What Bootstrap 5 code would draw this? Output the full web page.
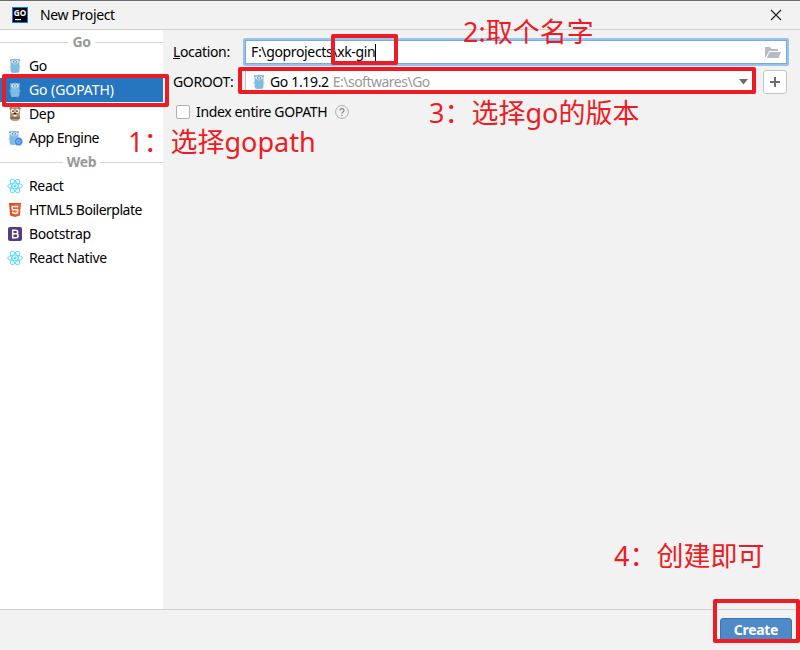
<!DOCTYPE html>
<html lang="zh">
<head>
<meta charset="utf-8">
<title>New Project</title>
<link href="https://cdn.jsdelivr.net/npm/bootstrap@5.3.0/dist/css/bootstrap.min.css" rel="stylesheet">
<style>
body{width:800px;height:650px;overflow:hidden;background:#f2f2f2;color:#000;font:14px/24px "Noto Sans","Noto Sans CJK SC",sans-serif;letter-spacing:-.35px}
.window{height:650px;border-top:1px solid #6b6a6d}
.titlebar{height:29px;border-bottom:1px solid #d1d1d1;padding:0 18px 0 12px}
.sidebar{width:163px;background:#fff}
.group{height:24px;color:#999;font-weight:700;gap:4px}
.group::before,.group::after{content:"";flex:1;height:1px;background:#d5d5d5}
.item{height:24px;padding-left:7px;gap:6px;white-space:nowrap}
.item.chosen{background:#2675bf;color:#fff;letter-spacing:-.08px}
.tight{letter-spacing:-.5px}
svg{display:block;flex:none}
.form-area{padding:8px 11px 0 10px}
.label-col{width:70px}
.location{height:28px;border:2px solid #97c3f3;box-shadow:inset 0 0 0 1px #7ea8d6;background:#fff;padding:0 6px;border-radius:2px}
.caret{width:1px;height:17px;background:#000}
.goroot-row{padding-top:3px}
.goroot{height:25px;width:510px;border:1px solid #c4c4c4;background:#fff;margin-left:2px;padding:0 6px 0 5px}
.ver{margin-left:3px}
.add{width:24px;height:24px;border:1px solid #c4c4c4;border-radius:3px;background:#fff;margin-right:2px}
.index-row{padding:6px 0 0 3px}
.check{width:14px;height:14px;border:1px solid #b0b0b0;border-radius:2px;background:#fff}
.index-text{margin-left:6px}
.muted{color:#999;letter-spacing:-.5px}
.bottom{height:41px;border-top:1px solid #d1d1d1;padding:8px 8px 0 0}
.create{width:72px;height:23px;background:#4e8ac8;border:1px solid #3d75b2;border-radius:3px 3px 0 0;color:#fff;font-weight:700;line-height:22px;letter-spacing:-.3px}
.frame{position:absolute;border:4px solid #ed1c24;border-radius:2px}
.note{position:absolute;color:#ed1c24;font-size:27px;line-height:36px;white-space:nowrap;letter-spacing:0}
.f1{left:2px;top:74px;width:167px;height:33px}
.f2{left:331px;top:34px;width:67px;height:31px}
.f3{left:238px;top:67px;width:518px;height:27px}
.f4{left:713px;top:599px;width:87px;height:44px}
.n1{left:128px;top:124px}.n2{left:463px;top:14px}.n3{left:429px;top:95px}.n4{left:614px;top:538px}
</style>
<script src="https://cdn.jsdelivr.net/npm/bootstrap@5.3.0/dist/js/bootstrap.bundle.min.js"></script>
</head>
<body>
<svg width="0" height="0" class="position-absolute">
<symbol id="gopher" viewBox="0 0 16 16"><circle cx="4" cy="2.200" r="1.100" fill="#7bb5d8"/><circle cx="12" cy="2.200" r="1.100" fill="#7bb5d8"/><path d="M3.500 4C3.500 1.700 5 .8 8 .8s4.500.9 4.500 3.200V12c0 2.200-1.500 3-4.500 3s-4.500-.8-4.500-3z" fill="#7bbde3"/><path d="M2.600 8h1v1.500h-1zM12.400 8h1v1.500h-1zM4.500 14.300h1.500v1H4.500zM10 14.300h1.500v1H10z" fill="#c9b49a"/><circle cx="6" cy="3.800" r="1.600" fill="#f4f8fa"/><circle cx="10" cy="3.800" r="1.600" fill="#f4f8fa"/><circle cx="6.300" cy="3.900" r=".65" fill="#444"/><circle cx="9.700" cy="3.900" r=".65" fill="#444"/><path d="M7.200 5.200h1.600v1.500H7.200z" fill="#d8cbb5"/></symbol>
<symbol id="react" viewBox="0 0 16 16"><g fill="none" stroke="#61dafb" stroke-width="1"><ellipse cx="8" cy="8" rx="7.300" ry="2.900"/><ellipse cx="8" cy="8" rx="7.300" ry="2.900" transform="rotate(60 8 8)"/><ellipse cx="8" cy="8" rx="7.300" ry="2.900" transform="rotate(120 8 8)"/></g><circle cx="8" cy="8" r="1.500" fill="#61dafb"/></symbol>
</svg>
<div class="window d-flex flex-column position-relative">
  <header class="titlebar d-flex align-items-center">
    <svg width="16" height="16" viewBox="0 0 16 16"><path fill="#087cfa" d="M0 0h16v16H0z"/><path d="M1 1h14v14H1z"/><path d="M3 12h6v1.200H3z" fill="#fff"/><text x="1.800" y="8.600" font-size="8" font-weight="700" letter-spacing="0" textLength="12.400" lengthAdjust="spacingAndGlyphs" fill="#fff">GO</text></svg>
    <span class="ms-2 ps-1 me-auto">New Project</span>
    <svg width="12" height="12" viewBox="0 0 12 12"><path d="M1 1l10 10M11 1L1 11" stroke="#222" stroke-width="1.200"/></svg>
  </header>
  <main class="d-flex flex-grow-1">
    <nav class="sidebar">
      <div class="group d-flex align-items-center">Go</div>
      <div class="item d-flex align-items-center"><svg width="16" height="16"><use href="#gopher"/></svg>Go</div>
      <div class="item chosen d-flex align-items-center"><svg width="16" height="16"><use href="#gopher"/></svg>Go (GOPATH)</div>
      <div class="item d-flex align-items-center"><svg width="16" height="16" viewBox="0 0 16 16"><circle cx="4" cy="2.500" r="1.500" fill="#8a6848"/><circle cx="12" cy="2.500" r="1.500" fill="#8a6848"/><path d="M3 5c0-2.500 1.500-4 5-4s5 1.500 5 4v7c0 2-1.500 3-5 3s-5-1-5-3z" fill="#b99670"/><path d="M3.500 10.500h9v2.500h-9z" fill="#8d6849"/><circle cx="5.600" cy="5" r="1.900" fill="#fff"/><circle cx="10.400" cy="5" r="1.900" fill="#fff"/><circle cx="6" cy="5.100" r=".9" fill="#222"/><circle cx="10" cy="5.100" r=".9" fill="#222"/><ellipse cx="8" cy="7.700" rx="1.700" ry="1" fill="#3e2b20"/><path d="M6.500 8.700h3v1.800h-3z" fill="#fff"/></svg>Dep</div>
      <div class="item tight d-flex align-items-center"><svg width="16" height="16"><use href="#gopher" x="-1"/><circle cx="11.500" cy="11.500" r="4.200" fill="#4285e8" stroke="#fff" stroke-width=".4"/><circle cx="11.500" cy="11.500" r="1.700" fill="none" stroke="#a9c9fa"/></svg>App Engine</div>
      <div class="group d-flex align-items-center">Web</div>
      <div class="item d-flex align-items-center"><svg width="16" height="16"><use href="#react"/></svg>React</div>
      <div class="item tight d-flex align-items-center"><svg width="16" height="16" viewBox="0 0 16 16"><path d="M2 1h12l-1.100 12.500L8 15l-4.900-1.500z" fill="#e44d26"/><path d="M8 2h5l-1 10.800L8 14z" fill="#f16529"/><path d="M11.300 4.500H5.200l.3 3.300H10.700l-.3 3L8 11.500l-2.300-.7-.1-1.200" fill="none" stroke="#fff" stroke-width="1.500"/></svg>HTML5 Boilerplate</div>
      <div class="item d-flex align-items-center"><svg width="16" height="16" viewBox="0 0 16 16"><rect x="1" y="1" width="14" height="14" rx="2" fill="#563d7c"/><path d="M5.700 4.200h3c2.700 0 2.700 3.600 0 3.600h-3zm0 3.600h3.200c2.900 0 2.900 4 0 4H5.700z" fill="none" stroke="#fff" stroke-width="1.500"/></svg>Bootstrap</div>
      <div class="item d-flex align-items-center"><svg width="16" height="16"><use href="#react"/></svg>React Native</div>
    </nav>
    <section class="form-area flex-grow-1">
      <div class="d-flex align-items-center">
        <label class="label-col"><u>L</u>ocation:</label>
        <div class="location d-flex align-items-center flex-grow-1"><span class="path">F:\goprojects\xk-gin</span><i class="caret"></i>
        <svg class="ms-auto" width="16" height="16" viewBox="0 0 16 16"><path d="M0 13V3h5l1.500 2H13v2H4L1 13z" fill="#b5bbc0"/><path d="M4.500 8H16l-2.500 6H1.800z" fill="#b5bbc0"/></svg></div>
      </div>
      <div class="goroot-row d-flex align-items-center">
        <label class="label-col">GOROOT:</label>
        <div class="goroot d-flex align-items-center"><svg width="16" height="16"><use href="#gopher"/></svg><span class="ver">Go 1.19.2</span><span class="muted ms-1">E:\softwares\Go</span><svg class="ms-auto" width="9" height="6" viewBox="0 0 9 6"><path d="M0 0h9L4.500 5.500z" fill="#6e6e6e"/></svg></div>
        <div class="add ms-auto d-flex align-items-center justify-content-center"><svg width="12" height="12" viewBox="0 0 12 12"><path d="M6 1v10M1 6h10" stroke="#6e6e6e" stroke-width="2"/></svg></div>
      </div>
      <div class="index-row d-flex align-items-center"><span class="check"></span><span class="index-text">Index entire GOPATH</span>
        <svg class="ms-2" width="14" height="14" viewBox="0 0 14 14"><circle cx="7" cy="7" r="6.400" fill="none" stroke="#a5adb2"/><path d="M5 5.500c0-2.700 4-2.500 4-.1C9 7 7 6.800 7 8.500M7 9.700v1.300" fill="none" stroke="#7f8588" stroke-width="1.200"/></svg>
      </div>
    </section>
  </main>
  <footer class="bottom d-flex justify-content-end"><div class="create text-center">Create</div></footer>
</div>
<div class="frame f1"></div><div class="frame f2"></div><div class="frame f3"></div><div class="frame f4"></div>
<div class="note n1">1：选择gopath</div><div class="note n2">2:取个名字</div><div class="note n3">3：选择go的版本</div><div class="note n4">4：创建即可</div>
</body>
</html>
